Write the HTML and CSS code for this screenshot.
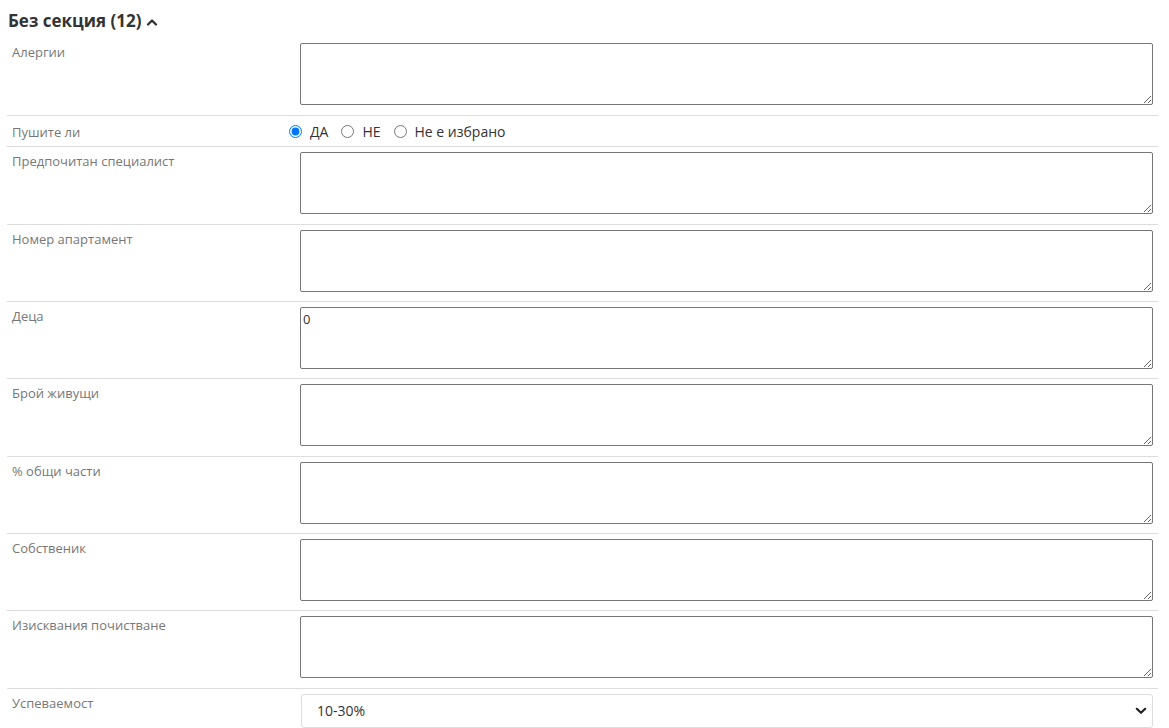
FILE: index.html
```html
<!DOCTYPE html>
<html lang="bg">
<head>
<meta charset="utf-8">
<title>Без секция</title>
<link rel="stylesheet" href="styles.css">
</head>
<body>
<div class="section">
  <div class="section-title">Без секция (12)
    <svg class="caret" width="12" height="10" viewBox="0 0 12 10"><path d="M2 7.5 L6 3.5 L10 7.5" fill="none" stroke="#333" stroke-width="2.4" stroke-linecap="round" stroke-linejoin="round"/></svg>
  </div>
  <div class="row row-first"><div class="label">Алергии</div><div class="value"><textarea class="ta"></textarea></div></div>
  <div class="row row-radio"><div class="label">Пушите ли</div>
    <div class="value radios">
      <label class="opt"><input type="radio" name="smoke" checked> ДА</label>
      <label class="opt"><input type="radio" name="smoke"> НЕ</label>
      <label class="opt"><input type="radio" name="smoke"> Не е избрано</label>
    </div>
  </div>
  <div class="row"><div class="label">Предпочитан специалист</div><div class="value"><textarea class="ta"></textarea></div></div>
  <div class="row"><div class="label">Номер апартамент</div><div class="value"><textarea class="ta"></textarea></div></div>
  <div class="row"><div class="label">Деца</div><div class="value"><textarea class="ta">0</textarea></div></div>
  <div class="row"><div class="label">Брой живущи</div><div class="value"><textarea class="ta"></textarea></div></div>
  <div class="row"><div class="label">% общи части</div><div class="value"><textarea class="ta"></textarea></div></div>
  <div class="row"><div class="label">Собственик</div><div class="value"><textarea class="ta"></textarea></div></div>
  <div class="row"><div class="label">Изисквания почистване</div><div class="value"><textarea class="ta"></textarea></div></div>
  <div class="row row-select"><div class="label">Успеваемост</div>
    <div class="value"><div class="select-wrap">
      <select class="sel"><option>10-30%</option><option>30-60%</option><option>60-100%</option></select>
      <svg class="chev" width="12" height="8" viewBox="0 0 12 8"><path d="M1.8 1.8 L6 5.8 L10.2 1.8" fill="none" stroke="#222" stroke-width="2.2" stroke-linecap="round" stroke-linejoin="round"/></svg>
    </div></div>
  </div>
</div>
</body>
</html>
```
FILE: styles.css
```css
html, body {
  margin: 0;
  padding: 0;
  background: #fff;
  font-family: "Open Sans", "Liberation Sans", sans-serif;
}
.section {
  width: 1151px;
  margin-left: 7px;
}
.section-title {
  height: 38px;
  box-sizing: border-box;
  padding: 4px 0 0 1px;
  font-size: 17px;
  font-weight: 700;
  color: #333;
  line-height: 24px;
  display: flex;
  align-items: center;
  gap: 5px;
}
.caret { margin-top: 1px; }
.row {
  display: grid;
  grid-template-columns: 277px 1fr;
  border-bottom: 1px solid #ddd;
  padding: 5px 0 9.33px;
}
.row-first { padding-bottom: 10.33px; }
.label {
  padding-left: 5px;
  font-size: 13px;
  line-height: 18px;
  color: #777;
}
.ta {
  display: block;
  margin: 0 0 0 16px;
  width: 853px;
  height: 62px;
  box-sizing: border-box;
  border: 1px solid #767676;
  border-radius: 2px;
  padding: 2px;
  font-family: "Open Sans", "Liberation Sans", sans-serif;
  font-size: 13px;
  color: #333;
  resize: vertical;
}
.row-radio {
  padding: 6px 0 5px;
  align-items: center;
}
.radios {
  display: flex;
  align-items: center;
  gap: 13px;
  height: 19px;
}
.opt {
  display: flex;
  align-items: center;
  font-size: 14px;
  color: #333;
  gap: 8px;
}
.opt input {
  margin: 0;
  width: 13px;
  height: 13px;
}
.opt:first-child input { margin-left: 5px; }
.row-select {
  border-bottom: none;
  padding-bottom: 0;
}
.select-wrap {
  position: relative;
  margin-left: 17px;
  width: 852px;
}
.sel {
  display: block;
  width: 100%;
  height: 34px;
  box-sizing: border-box;
  border: 1px solid #ddd;
  border-radius: 3px;
  background: #fff;
  appearance: none;
  -webkit-appearance: none;
  padding: 0 15px;
  font-family: "Open Sans", "Liberation Sans", sans-serif;
  font-size: 14px;
  color: #333;
}
.chev {
  position: absolute;
  right: 6px;
  top: 13px;
  pointer-events: none;
}
```
